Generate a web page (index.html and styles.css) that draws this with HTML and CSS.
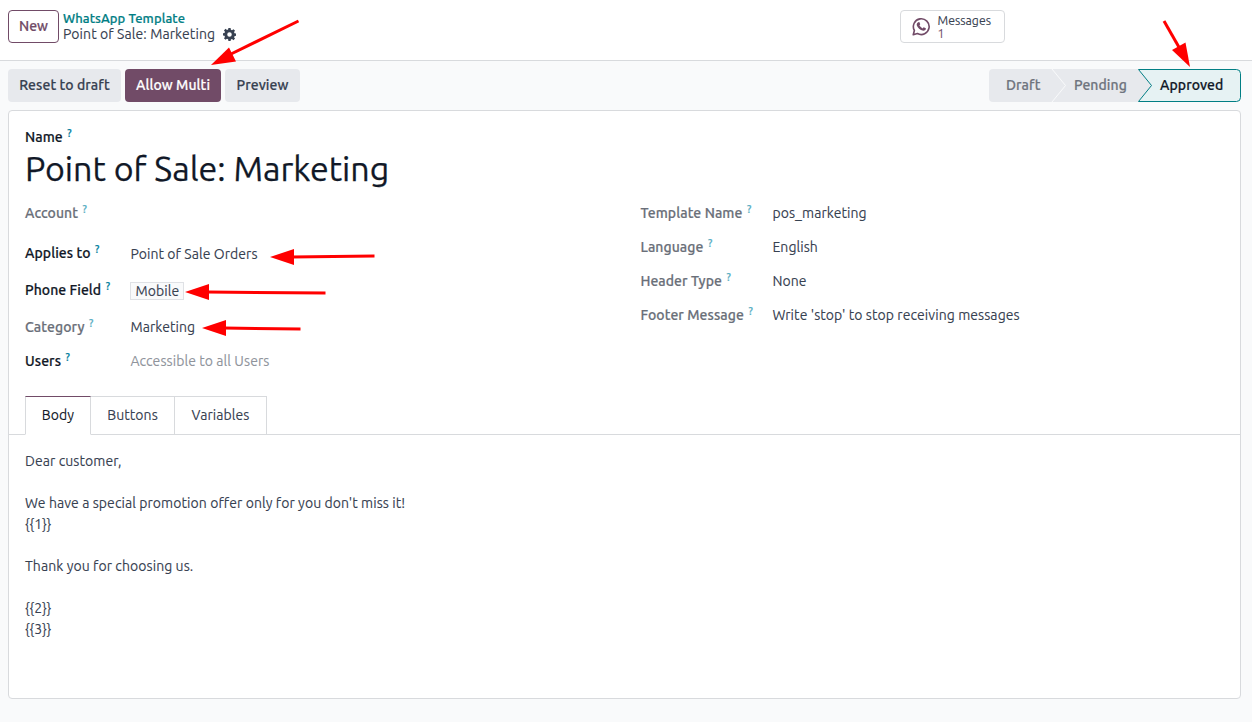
FILE: index.html
```html
<!DOCTYPE html>
<html lang="en">
<head>
<meta charset="utf-8">
<title>Point of Sale: Marketing</title>
<link rel="stylesheet" href="styles.css">
</head>
<body>
<header class="control-panel">
  <button class="btn btn-new">New</button>
  <div class="breadcrumb">
    <a class="crumb-link">WhatsApp Template</a>
    <div class="crumb-current"><span>Point of Sale: Marketing</span>
      <svg class="gear" viewBox="0 0 24 24"><path fill="#374151" fill-rule="evenodd" d="M10 0h4l.6 3.200 2 .9 2.800-1.900 2.800 2.800-1.800 2.600.8 2 3 .6v4.200l-3 .6-.8 2 1.800 2.600-2.800 2.800-2.800-1.900-2 .9L14 24h-4l-.6-3.200-2-.9-2.800 1.900L1.800 19l1.800-2.600-.8-2-3-.6V9.600l3-.6.8-2L1.800 4.400 4.600 1.600l2.800 1.900 2-.8zM12 7.800a4.200 4.200 0 1 0 0 8.400 4.200 4.200 0 0 0 0-8.400z"/></svg>
    </div>
  </div>
  <div class="stat-button">
    <svg class="whatsapp" viewBox="0 0 20 20" fill="none" stroke="#714b67"><path stroke-width="1.700" stroke-linejoin="round" d="M1.300 18.700l1.200-4.500a8.300 8.300 0 1 1 3.200 3.200z"/><path fill="#714b67" stroke="none" d="M7.300 5.300c.3 0 .5.100.6.400l.7 1.700c.2.400-.5 1-.8 1.400.9 1.600 1.900 2.500 3.500 3.200.4-.4.8-1.200 1.200-1.100l1.900.9c.3.200.3.400.2.800-.3 1.400-1.600 1.900-2.700 1.800-3.400-.5-6.100-3-6.900-5.600-.3-1.500.6-3.300 2.300-3.500z"/></svg>
    <div class="stat-text"><span>Messages</span><span class="stat-value">1</span></div>
  </div>
</header>
<div class="statusbar">
  <button class="btn btn-secondary btn-reset">Reset to draft</button>
  <button class="btn btn-primary">Allow Multi</button>
  <button class="btn btn-secondary btn-preview">Preview</button>
  <div class="stages">
    <svg class="stages-shape" viewBox="0 0 252 33"><path fill="#e7e9ed" d="M4 0H149l14 16.500L149 33H4a4 4 0 0 1-4-4V4a4 4 0 0 1 4-4z"/><path fill="none" stroke="#f9fafb" d="M63 0l13.500 16.500L63 33"/><path fill="#e6f2f3" stroke="#017e84" d="M149.500.5H247.500a4 4 0 0 1 4 4V28.500a4 4 0 0 1-4 4H149.500L162.500 16.500z"/></svg>
    <span class="stage stage-draft">Draft</span>
    <span class="stage stage-pending">Pending</span>
    <span class="stage stage-current">Approved</span>
  </div>
</div>
<main class="sheet">
  <label class="title-label">Name<sup>?</sup></label>
  <h1>Point of Sale: Marketing</h1>
  <div class="fields">
    <div class="group group-left">
      <label class="readonly">Account<sup>?</sup></label><span></span>
      <label>Applies to<sup>?</sup></label><div class="value lower">Point of Sale Orders</div>
      <label>Phone Field<sup>?</sup></label><div class="value lower"><span class="tag">Mobile</span></div>
      <label class="readonly">Category<sup>?</sup></label><div class="value">Marketing</div>
      <label>Users<sup>?</sup></label><div class="value placeholder">Accessible to all Users</div>
    </div>
    <div class="group group-right">
      <label class="readonly">Template Name<sup>?</sup></label><div class="value">pos_marketing</div>
      <label class="readonly">Language<sup>?</sup></label><div class="value">English</div>
      <label class="readonly">Header Type<sup>?</sup></label><div class="value">None</div>
      <label class="readonly">Footer Message<sup>?</sup></label><div class="value">Write 'stop' to stop receiving messages</div>
    </div>
  </div>
  <nav class="tabs">
    <a class="tab active">Body</a>
    <a class="tab tab-buttons">Buttons</a>
    <a class="tab tab-variables">Variables</a>
  </nav>
  <div class="message">
    <div>Dear customer,</div><br>
    <div>We have a special promotion offer only for you don't miss it!</div>
    <div>{{1}}</div><br>
    <div>Thank you for choosing us.</div><br>
    <div>{{2}}</div>
    <div>{{3}}</div>
  </div>
</main>
<svg class="arrows" viewBox="0 0 1252 722" fill="#f00" stroke="#f00" stroke-width="3">
  <path d="M298.500 21L230 54.500"/><path stroke="none" d="M211 65l18-17.500 7 14z"/>
  <path d="M1164 21L1180 49"/><path stroke="none" d="M1190 67l-18-17 13.500-7.500z"/>
  <path d="M374.500 256L292 257"/><path stroke="none" d="M270 257l24-8v16z"/>
  <path d="M325.500 293L207 292"/><path stroke="none" d="M185 292l24-8v16z"/>
  <path d="M300.500 329L224 328"/><path stroke="none" d="M202 328l24-8v16z"/>
</svg>
</body>
</html>
```
FILE: styles.css
```css
* { box-sizing: border-box; }
body { margin: 0; height: 722px; overflow: hidden; background: #f9fafb; color: #374151; font: 14px/21px Ubuntu, "Noto Sans", sans-serif; letter-spacing: .07px; -webkit-text-stroke: .1px; }
.control-panel { display: flex; height: 61px; padding: 10px 8px 0; background: #fff; border-bottom: 1px solid #d8dadd; }
.btn { height: 33px; padding: 0 0 1px; border: 1px solid transparent; border-radius: 4px; font: inherit; letter-spacing: .08px; font-weight: 500; color: #374151; display: flex; align-items: center; justify-content: center; white-space: nowrap; }
.btn, .crumb-link, .stage, label { -webkit-text-stroke: .2px; }
.btn-new { width: 51px; background: #fff; border-color: #714b67; color: #714b67; }
.breadcrumb { margin-left: 4px; width: 832px; }
.crumb-link { display: block; height: 16px; line-height: 17px; font-size: 13px; font-weight: 500; color: #017e84; }
.crumb-current { display: flex; align-items: center; height: 16px; line-height: 16px; white-space: nowrap; letter-spacing: .09px; }
.crumb-current > span { width: 152px; }
.gear { width: 13px; height: 13px; margin-left: 8px; }
.stat-button { display: flex; width: 105px; height: 33px; margin-left: 5px; padding: 0 0 0 11px; border: 1px solid #d8dadd; border-radius: 4px; }
.whatsapp { width: 19px; height: 19px; margin-top: 6px; }
.stat-text { display: flex; flex-direction: column; margin: 3px 0 0 6.500px; font-size: 12.250px; line-height: 13px; letter-spacing: 0; }
.stat-value { color: #714b67; }
.statusbar { display: flex; gap: 4px; padding: 8px 11px 0 8px; height: 49px; }
.btn-secondary { background: #e7e9ed; }
.btn-primary { width: 96px; background: #714b67; color: #fff; }
.btn-reset { width: 113px; }
.btn-preview { width: 75px; }
.stages { position: relative; display: flex; width: 252px; height: 33px; margin-left: auto; }
.stages-shape { position: absolute; inset: 0; width: 252px; height: 33px; }
.stage { position: relative; padding-top: 6px; font-weight: 500; color: #6f747e; }
.stage-draft { margin-left: 17px; width: 68px; }
.stage-pending { width: 86px; }
.stage-current { color: #111827; }
.sheet { width: 1233px; height: 589px; margin-left: 8px; background: #fff; border: 1px solid #d8dadd; border-radius: 4px; padding-top: 16px; }
label { display: flex; align-items: center; font-weight: 500; color: #111827; white-space: nowrap; }
label.readonly { color: #6a6f79; }
sup { margin-left: 4.500px; font-size: 10.5px; line-height: 10px; color: #017e9e; height: 10px; transform: translateY(-4px); }
.title-label sup { transform: translateY(-5px); }
.readonly sup { color: #5aaec3; }
.title-label { margin-left: 16px; }
h1 { margin: 0 0 0 16px; height: 45px; font-size: 34px; font-weight: 400; line-height: 40px; letter-spacing: 0; color: #111827; -webkit-text-stroke: .25px; }
.fields { display: flex; margin-left: 16px; height: 203px; }
.group { display: grid; align-content: start; align-items: center; }
.group-left { width: 615px; grid-template-columns: 105px 1fr; grid-template-rows: 40px 40px 34px 40px 28px; }
.group-right { grid-template-columns: 132px 1fr; grid-template-rows: repeat(4, 34px); padding-top: 3px; }
.group-right label { padding-left: .4px; }
.value { padding-left: .4px; }
.lower { padding-top: 2px; }
.placeholder { color: #8f949c; }
.tag { display: flex; align-items: center; justify-content: center; width: 54px; height: 18px; background: #f9fafb; border: 1px solid #dfe1e5; }
.tabs { display: flex; height: 39px; padding-left: 16px; box-shadow: inset 0 -1px #d8dadd; }
.tab { height: 39px; padding-top: 8px; text-align: center; border: 1px solid #d8dadd; border-left: 0; }
.tab.active { width: 66px; border-left: 1px solid #d8dadd; border-top-color: #714b67; border-bottom-color: #fff; background: #fff; color: #111827; }
.tab-buttons { width: 84px; }
.tab-variables { width: 92px; }
.message { padding: 16px; }
.arrows { position: absolute; left: 0; top: 0; width: 1252px; height: 722px; pointer-events: none; }
```
